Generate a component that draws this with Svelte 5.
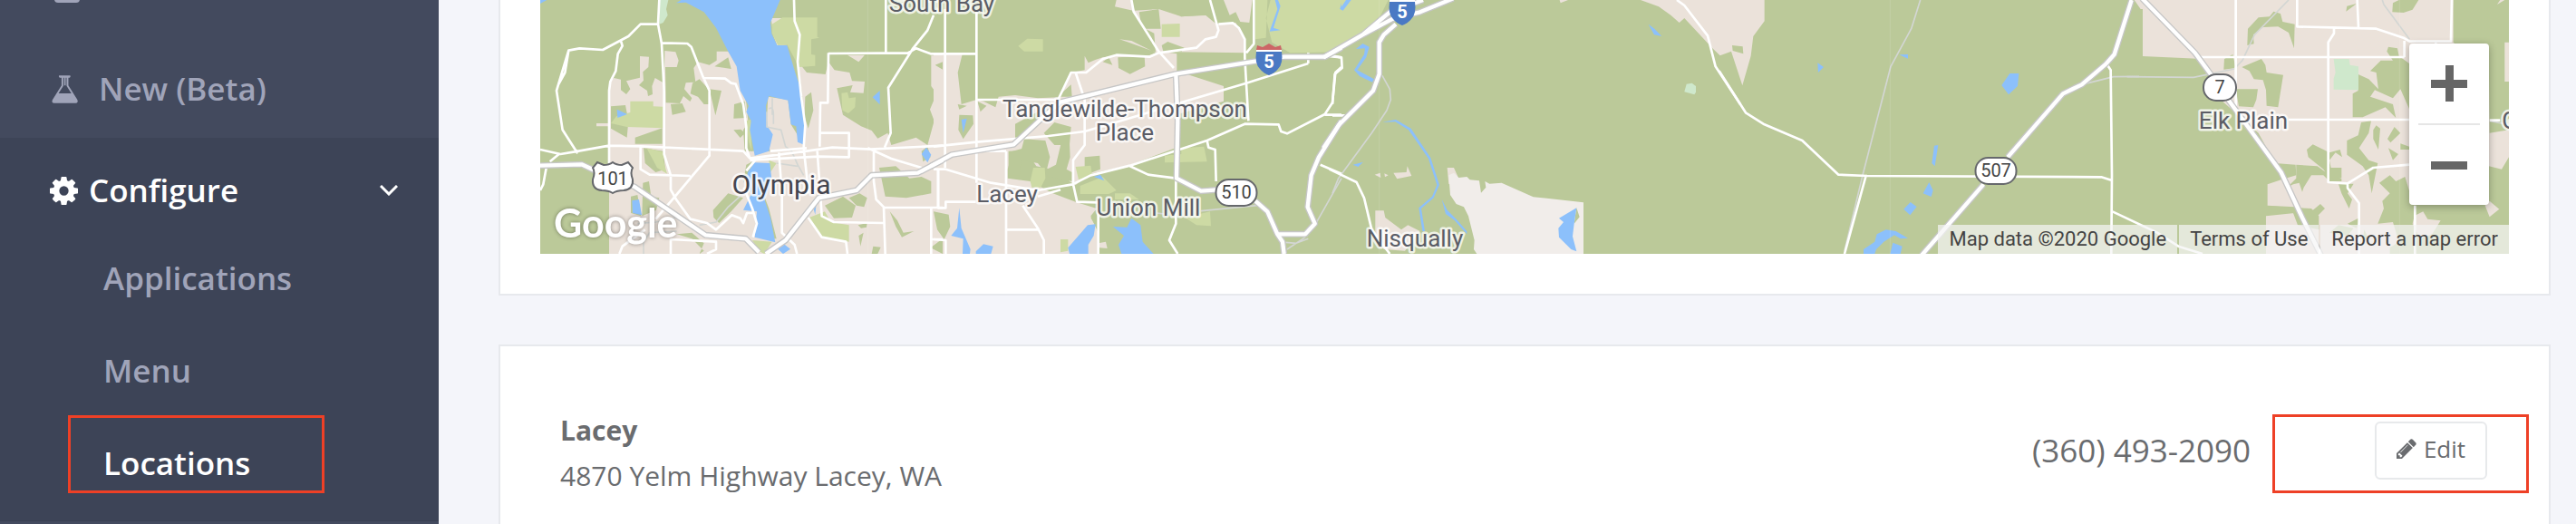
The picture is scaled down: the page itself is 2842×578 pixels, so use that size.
<script>
    const submenu = [
        { label: "Applications", active: false },
        { label: "Menu", active: false },
        { label: "Locations", active: true },
    ];

    const location = {
        name: "Lacey",
        address: "4870 Yelm Highway Lacey, WA",
        phone: "(360) 493-2090",
    };

    // Paint order of the map layers, bottom to top
    const layers = ["urban", "reserve", "green", "park", "mint", "water", "track", "road", "casing", "highway"];

    // Map geometry, one entry per tile. x is the tile offset in tile units (3 units = 1px)
    const olympia = {
        x: -18,
        urban:
            "M246 840V270L262 258 285 263 285 298 303 312 316 295 303 268 348 257V186L378 188 376 222 358 238 360 266 345 282 372 300 375 318 390 312 388 285 398 258 428 275 430 168 466 172 476 200 470 222 432 222 434 340 480 342 492 318 514 336 520 325 495 295 500 274 532 272 526 225 540 205 578 215 602 200V170H640L670 215 700 340 716 500H778L768 400 772 320 838 330 848 412 888 476 896 410 872 205 900 240 962 246 972 205 992 232 1042 240 1050 268 1092 270 1088 308 1044 305 1052 282 1000 292 1012 345 1020 380 1080 418 1115 432 1135 458 1168 440 1180 480 1262 455 1300 480 1322 400 1308 362 1330 310 1312 285V184H1350V840ZM204 408H250V418H204ZM1035 182H1092L1072 205ZM782 60L790 118 802 150 835 148 820 60Z",
        green:
            "M252 352L300 348 310 400 305 455 252 425ZM332 455L422 424V476L332 476ZM360 490L425 500 432 560 400 570 365 540ZM450 345L488 342 500 370 455 380ZM522 275L545 262 580 300V345H560L540 320 515 310ZM578 295L618 300 598 382ZM595 220L640 190 650 228ZM660 345L695 335 700 390 658 392ZM658 430L682 428 696 440 680 456ZM895 320L915 305 922 365 905 425 893 385ZM590 695L640 640 690 655 650 700 610 738 592 720ZM358 605L378 600 385 650 412 655 402 695 355 715ZM318 650L340 645 352 715 318 705ZM960 680L1020 650 1062 680 1050 720 990 722ZM1040 655L1075 640 1100 655 1090 685 1065 680ZM1140 555L1195 550 1240 590 1280 585 1312 600V640L1230 655 1160 650ZM1175 700L1200 730 1220 770 1255 765 1215 785 1195 750ZM1070 745L1100 738 1098 752 1080 755ZM1072 780L1088 770 1078 815ZM1120 815L1145 818 1135 840H1115ZM1310 820L1350 790V840ZM690 430L712 400 720 500H695ZM1280 500L1300 485 1310 520 1285 535ZM760 650L775 690 800 790 775 790ZM470 775L520 770 560 805 545 840 560 830 520 790ZM700 545L730 530 690 605ZM1325 215L1350 205V230Z",
        park:
            "M820 58H935V122L942 125 915 130V180L928 182V218L875 222 835 148 805 150 785 110 785 80ZM316 335H392V352L424 353V424L305 420 252 408 270 385 316 372ZM370 490L430 505 425 530 438 575 405 555ZM1015 308L1035 305 1040 325 1062 322 1060 355 1038 375 1018 365ZM700 400L715 395 718 500 708 470ZM908 720L960 700 980 735 1040 745V800L950 785ZM720 795L785 800 760 840 740 830ZM775 530L800 540 780 570Z",
        mint: "M414 0H442L435 30 440 50 425 75 412 80Z",
        water:
            "M468 10L500 8 560 40 600 92 640 170 668 220 680 300 708 350 700 370 716 400 712 430 728 515 775 500 788 445 770 418 765 350 775 318 838 332 848 412 865 418 870 470 888 478 896 415 882 340 880 295 862 240 835 150 802 150 784 112 780 75 812 0H485ZM18 0H40L18 12ZM272 362L306 378 274 390ZM1118 322L1142 300V346ZM728 538L778 540 785 600 760 660 780 720 796 802 728 785 735 700 690 695 718 640 700 600 705 570ZM322 664L345 660 354 712 324 705ZM1280 510L1296 488 1312 512 1300 538ZM802 822L825 808 846 824 822 840ZM920 680L932 675 928 710Z",
        track:
            "M775 360Q790 350 790 380V410M768 370V420L815 430 830 485 850 500 870 545 890 580M800 540L870 550M545 745L600 735 640 685 690 640M340 740L400 735 470 720M470 765L380 770 360 800V840M786 325V380",
        road:
            "M412 0L408 80 420 145 428 300V510L450 580V628L468 660 515 725 570 738 600 760 652 712 680 722 690 738 702 705 728 705M408 80H350L310 120 225 165 148 160 112 167 72 300 92 430 142 508M285 135L290 152 275 178 268 235 250 270 246 300V545M112 167L100 240 78 280M18 495L85 510 132 502 246 482 350 484 690 500 712 524 900 500 985 488 1110 494 1350 482M50 535L80 510M40 545L28 610 18 630M420 142L505 144 518 155 555 250 578 300V515L460 655 400 725M555 258L630 260 650 275 665 278 690 345 700 420V490L712 524M350 484V560L380 578 515 582M712 530L940 518 1040 520V440H945M858 0L860 70 877 115 870 205 882 320 895 415 890 490 900 580 905 640M972 175L970 340H945L943 485M935 500L945 640 950 715 990 735 1155 738M808 505L818 640V770L860 810 868 840M730 530L700 565M692 620L720 690 735 740 722 785M905 720L950 785 1030 800 1035 840M972 177L1235 175 1262 160 1310 178 1350 178M1162 0V175M1320 50L1300 100 1252 160 1170 290 1178 440 1158 488M1102 490L1180 525 1280 555M1122 500V600L1130 660 1155 685 1160 840M1155 687H1350M1312 687V840M1335 560V685M1312 792H1350M280 840L290 815 365 760M450 790V840M450 792L600 800 600 825 570 840M780 500L900 490",
        casing: "M18 548L155 544 200 565 330 618 565 778 698 790 742 835M765 840L830 795 940 655 1065 630 1115 580 1268 572 1350 530",
    };

    const lacey = {
        x: 1302,
        urban:
            "M0 180H95L80 240 92 345 142 330 165 335 205 355 215 320 270 315 345 325 415 322 455 240 500 232V185L512 208 535 198 560 190 620 184 700 188 750 170 805 178V235L960 285V335L800 380V490L652 545 520 575 470 612 450 600 405 545 390 560 340 550 300 490 262 500 245 560V590L320 600 395 640 470 668 540 690 520 715 545 770V840H0ZM605 0H655L665 35 745 30 820 55 900 50 930 75 945 80 1000 75 1030 130V175L800 172 740 175 650 142 615 130 655 135 735 175 730 110 700 95 660 35 600 22ZM930 0H1055L1045 75 1015 72 1000 40 980 50 960 0ZM545 805L570 800 575 822 550 820Z",
        green:
            "M248 500L290 498 300 460 370 465 385 520 375 560 405 545 430 440 450 470 452 520 440 560 458 570V600L380 585 345 540 290 530 285 580H248ZM270 410L345 370 350 400 270 465ZM145 335L175 350 155 370ZM85 380L130 382 132 410 98 460 82 430ZM0 700L50 710 55 750 35 792 12 760ZM410 320L455 280 458 320ZM680 40L745 30 752 95H690ZM820 20L870 0H920L930 50 870 52 818 55ZM755 150L775 138 830 158 820 172 760 170ZM610 190L698 185 700 220 650 245 612 225ZM560 205L580 190 592 215ZM520 720L545 700V765ZM500 520L550 515 552 560 500 580ZM80 345L110 350 85 362ZM365 440L400 405 455 420 450 480 400 480Z",
        park:
            "M755 80L815 78V122H755ZM280 152L310 128 362 130V170H300ZM1065 0H1115L1100 60 1120 140 1180 175 1350 172V0ZM1065 0H1105L1100 125 1065 130ZM470 552L520 548 525 580 480 595ZM485 615L560 585 605 630 580 642H485ZM765 515L820 510V490L895 485 905 535 765 538ZM832 720L915 700 918 748 870 745ZM320 600L330 555 368 555 370 590 355 620H325ZM420 792H445V830L420 835ZM600 640H650L680 660H600Z",
        water:
            "M1130 0H1140L1148 20 1125 92 1148 100 1112 104 1138 30ZM92 396L110 392 98 440ZM85 688L92 755 122 825 120 840H96L98 790 58 780 78 755ZM140 832L165 808 197 815 190 840H140ZM445 820L510 745 536 742 530 780 512 810V840H450ZM594 750L640 752 655 722 685 745 692 800 728 840H622L612 810 630 780ZM530 585L552 578 565 598ZM1345 30L1350 10V30Z",
        track: "M885 698L1070 680M1350 590L1265 740M1240 790L1200 805 1165 802M1230 785L1170 825M740 705L775 710",
        road:
            "M0 178H142M38 30V555M142 40V605M0 485L142 470 380 450 500 435 620 400 850 330 1035 275 1240 210M142 330H412L455 240H505L560 195 605 182 715 188 745 175 870 158 900 130 935 122 943 100 915 0M470 240L500 330V480L462 530V610L475 668 545 670V840M655 0L662 38 745 170 795 225M943 80L990 76 1010 92 1030 130V190L1042 400M1060 0V145L1035 175M0 560H40L190 605 345 630 460 610 520 580 650 548 905 465 1030 410 1142 412 1150 435 1170 442 1295 378 1320 340 1330 240 1350 222M650 550L710 578 802 590V740L780 795 808 840M905 465L910 488 932 495 935 600M240 500V840M142 500H240M242 760H345M15 560V688H40V668H140M295 680L345 755 365 795V840M0 792L40 795V840M1295 380H1350M1240 175V210M1280 545L1350 575M345 650L420 628M1300 185L1350 190",
        casing:
            "M-10 550L60 512 265 478 360 390 420 338 800 245 1050 205 1160 188H1295L1350 158M802 245L808 400 804 590 885 632 940 628M1065 665L1105 700 1138 775 1155 800 1160 840M1138 775H1230L1262 740 1238 685 1250 580 1275 520 1350 400",
    };

    const nisqually = {
        x: 2622,
        urban:
            "M1020 0H1430V70L1393 120 1385 185 1357 283 1320 170 1283 184 1258 160 1165 60 1148 75 1120 50 1080 22ZM1323 150L1358 152V178L1325 170ZM752 0H780L755 10ZM142 697H170L175 720 228 760 250 745 290 765 240 830 170 825 142 775ZM380 555H402L418 590 385 610ZM202 572L245 570 248 550 262 582 214 592ZM140 578L158 572 160 588ZM172 574L185 580 174 586Z",
        reserve:
            "M385 580L402 572 418 588 445 585 455 595 486 598 492 638 508 620 505 600 520 608 560 605 665 652 710 656 831 670V840H478L468 825 470 795 450 715 435 685 410 675 390 645Z",
        green: "M1323 150L1358 154 1360 178 1325 168ZM808 688L818 718 800 740Z",
        park: "M0 0H185L160 50 100 110 0 165Z",
        mint: "M1172 278L1190 275 1203 285V305L1198 313 1165 304Z",
        water:
            "M45 0H62L35 35 25 30ZM78 162L100 144 122 155 112 190 82 232 138 262 132 272 90 252 72 232 105 180 108 160ZM165 404L210 396 260 425 325 522 354 612 335 655 294 690 306 765H298L286 688 330 650 346 612 318 525 252 430 208 403ZM362 660L380 695 410 725 445 765V775L405 730 375 708ZM808 688L800 740 795 782 808 832 790 825 750 785 748 755 765 735 750 722ZM1046 80L1066 95 1090 120 1065 115ZM68 545L102 536 85 552Z",
        track: "M165 250L190 295 193 330 180 365 130 440 20 590 0 640",
        road: "M1140 0L1165 18 1242 118 1268 220 1350 345M-10 560L80 603 105 655 130 760 190 840M0 185L30 190 32 225 8 245 0 345M0 382H45",
        casing:
            "M-30 190L100 115 190 40 300 0M100 115L200 62 290 40 400 -5M210 80L170 115 155 140V245L135 300 20 415 -30 490",
    };

    const yelm = {
        x: 3942,
        water:
            "M286 208L306 222 288 240ZM556 181L585 180V194ZM922 243H952L948 285 918 313 895 282ZM672 482L685 480 674 550 664 540ZM655 603L668 630 662 651 635 640ZM593 669L614 684 592 712 571 692ZM482 775L512 760 545 765 585 788 560 790 540 778 505 800 480 825 475 840H438V825L475 800ZM535 803L566 815 560 840H526Z",
        track: "M626 0L596 95 528 220 435 580 375 830M1160 280L1265 254 1350 253",
        road: "M-40 235L48 373 110 412 235 465 355 578 450 582 1225 586 1258 596M445 585L375 840M1245 215L1256 232 1260 580 1258 840M1262 700L1410 770 1480 815 1560 840",
        casing: "M1325 0L1268 180 1240 212 1160 280 1098 310 915 520M835 610L630 845",
    };

    const elkPlain = {
        x: 5262,
        urban:
            "M14 0H1070V140L1188 250 1190 440 1254 430V520L1230 560 1188 550 1000 480 940 500 900 840H450V715L545 705V685L455 680V610L500 595 550 580 548 545 480 540 425 440 300 330 240 195 42 186V30H35ZM1240 140H1254V270H1240ZM1175 680L1190 665 1222 692 1190 718ZM925 722L970 700 985 725 1028 730 1000 775 960 790ZM1215 15L1240 0H1225Z",
        green:
            "M388 150L390 95 425 58 462 55 475 38 498 45 505 72 545 80 543 160 525 108 490 88 440 90 408 115 410 145ZM310 230L312 195 340 180 350 225ZM370 222L435 195 448 215 452 240 507 248 490 355 452 350 450 298 440 265 410 262 395 235ZM350 295H423L418 330 408 355 360 352ZM870 10L890 0H955L935 32 905 42 868 40ZM718 20L750 12 715 38ZM742 240L790 262 822 295 815 240 795 235 830 200 870 200 850 170 855 155 885 160 890 185 924 210V360L895 295 870 325 810 298 795 320 870 345 880 390 845 355 770 388H737V310L755 300ZM765 405L798 400 790 440 758 490 790 530 820 540 800 640 790 580 770 550 718 512V465L755 448ZM805 430L815 415 828 425 822 495 805 460ZM875 420L895 440 862 472 852 460ZM855 490L888 510 870 530ZM895 475L924 485V495H895ZM585 495L605 478 660 505 695 495 702 520 680 505 660 530 665 555 700 555V588H660L640 560 615 540 590 520ZM550 545L620 550 655 575 700 590V600L660 600 640 580 600 580 575 620 570 635 560 605 540 610 520 620 550 590ZM690 610L740 608 720 640 735 660 725 690 700 640ZM825 605L860 580 880 600 910 585 945 700 910 840H860V820L890 800 870 735 820 740 840 690 835 665 860 640ZM600 700L630 675 645 690 610 725ZM660 770L690 745 740 755 720 780ZM455 682L600 690 625 715V760L555 745 540 705 500 702ZM720 740L760 720 750 755ZM775 760L790 790 770 800Z",
        mint: "M674 195H725L728 215 756 220V298L674 296V260L680 240Z",
        park: "M685 212L692 210 694 238H685Z",
        track: "M-10 254L210 256 345 228 372 200 412 115 525 0M835 0L840 15 925 130M1190 400L1254 412",
        road: "M350 0V355M232 189H908M553 0V88L700 92 815 95 905 125 925 137H1062L1065 0M752 0L756 90M675 95V110L656 140V603L720 607 805 555 924 545M908 189V135M525 396H924M1190 398H1225M720 610V622L758 672V840M943 680V840M1012 140V150",
        casing: "M40 -5L215 175 270 250M325 330L500 570 570 720 632 845",
    };

    const tiles = [olympia, lacey, nisqually, yelm, elkPlain].map((t) => ({ ...t, highway: t.casing }));

    const places = [
        { text: "South Bay", x: 443, y: 13 },
        { text: "Tanglewilde-Thompson", x: 645, y: 129 },
        { text: "Place", x: 645, y: 155 },
        { text: "Lacey", x: 515, y: 223 },
        { text: "Union Mill", x: 671, y: 238 },
        { text: "Nisqually", x: 965, y: 272 },
        { text: "Elk Plain", x: 1879, y: 142 },
        { text: "G", x: 2173, y: 142 },
    ];

    const routes = [
        { text: "510", x: 768, y: 212, w: 45 },
        { text: "507", x: 1606, y: 188, w: 45 },
        { text: "7", x: 1853, y: 96, w: 36 },
    ];

    const interstates = [
        { x: 804, y: 66 },
        { x: 951, y: 11 },
    ];
</script>

<div class="layout">
    <nav class="sidebar" aria-label="Main">
        <div class="nav-peek">
            <svg class="peek-icon" viewBox="0 0 28 28" aria-hidden="true">
                <rect width="28" height="28" rx="4" />
            </svg>
        </div>
        <a class="nav-item" href="#new">
            <svg class="nav-icon" viewBox="0 0 90 94" aria-hidden="true">
                <path
                    fill-rule="evenodd"
                    d="M27 1H62Q64 1 64 4T61 8H57V34L87 82Q91 93 81 93H10Q-1 93 4 82L34 34V8H29Q25 8 25 4T27 1ZM40 8V36L24 61H67L51 36V8H48V34H43V8Z"
                />
            </svg>
            <span class="nav-label">New (Beta)</span>
        </a>
        <div class="nav-section">
            <button type="button" class="nav-toggle" aria-expanded="true">
                <svg class="nav-icon" viewBox="128 128 1536 1536" aria-hidden="true">
                    <path
                        d="M1152 896q0-106-75-181t-181-75-181 75-75 181 75 181 181 75 181-75 75-181zm512-109v222q0 12-8 23t-20 13l-185 28q-19 54-39 91 35 50 107 138 10 12 10 25t-9 23q-27 37-99 108t-94 71q-12 0-26-9l-138-108q-44 23-91 38-16 136-29 186-7 28-36 28h-222q-14 0-24.5-8.5t-11.5-21.5l-28-184q-49-16-90-37l-141 107q-10 9-25 9-14 0-25-11-126-114-165-168-7-10-7-23 0-12 8-23 15-21 51-66.5t54-70.5q-27-50-41-99l-183-27q-13-2-21-12.5t-8-23.5v-222q0-12 8-23t19-13l186-28q14-46 39-92-40-57-107-138-10-12-10-24 0-10 9-23 26-36 98.5-107.5t94.5-71.5q13 0 26 10l138 107q44-23 91-38 16-136 29-186 7-28 36-28h222q14 0 24.5 8.5t11.5 21.5l28 184q49 16 90 37l142-107q9-9 24-9 13 0 25 10 129 119 165 170 7 8 7 22 0 12-8 23-15 21-51 66.5t-54 70.5q26 50 41 98l183 28q13 2 21 12.5t8 23.5z"
                    />
                </svg>
                <span class="toggle-label">Configure</span>
                <svg class="chevron" viewBox="0 0 20 12" aria-hidden="true">
                    <path d="M1 1l9 9 9-9" />
                </svg>
            </button>
            <ul class="submenu">
                {#each submenu as item}
                    <li>
                        <a
                            class="submenu-link"
                            class:active={item.active}
                            aria-current={item.active ? "page" : undefined}
                            href="#{item.label.toLowerCase()}"
                        >{item.label}</a>
                    </li>
                {/each}
            </ul>
        </div>
    </nav>

    <main class="content">
        <section class="card map-card">
            <div class="map">
                <svg class="map-canvas" viewBox="0 0 2172 280" preserveAspectRatio="xMidYMid slice" role="img" aria-label="Map of Lacey and Olympia">
                    <g transform="scale(0.33333)">
                        {#each layers as layer}
                            {#each tiles as tile}
                                {#if tile[layer]}
                                    <path class={layer} d={tile[layer]} transform="translate({tile.x})" />
                                {/if}
                            {/each}
                        {/each}
                        <path class="seam" d="M1084 0V840M2777 0V840M4468 0V840M6154 0V840" />
                    </g>

                    <g transform="translate(80 195)">
                        <path class="shield" d="M-17 -16L-10 -13Q-4 -13 0 -16Q4 -13 10 -13L17 -16L22 -10Q19 -5 22 3Q23 14 12 15Q5 15 0 18Q-5 15 -12 15Q-23 14 -22 3Q-19 -5 -22 -10Z" />
                        <text class="route" y="9">101</text>
                    </g>
                    {#each routes as route}
                        <g transform="translate({route.x} {route.y})">
                            <rect class="shield" x={-route.w / 2} y="-14" width={route.w} height="29" rx="14" />
                            <text class="route" y="7">{route.text}</text>
                        </g>
                    {/each}
                    {#each interstates as sign}
                        <g transform="translate({sign.x} {sign.y})">
                            <path class="sign-top" d="M-13 -16L-7 -14 0 -18 7 -14 13 -16 14 -11H-14Z" />
                            <path class="sign-edge" d="M-14 -11H14V-8H-14Z" />
                            <path class="sign-body" d="M-14 -9H14Q16 4 10 10Q6 15 0 17Q-6 15 -10 10Q-16 4 -14 -9Z" />
                            <text class="sign-text" y="9">5</text>
                        </g>
                    {/each}

                    {#each places as place}
                        <text class="place" x={place.x} y={place.y}>{place.text}</text>
                    {/each}
                    <text class="place city" x="266" y="214">Olympia</text>
                    <text class="google" x="15" y="262">Google</text>
                </svg>

                <div class="zoom">
                    <button type="button" class="zoom-button" aria-label="Zoom in">
                        <svg viewBox="0 0 40 40" aria-hidden="true"><path d="M16 0h9v16h15v9H25v15h-9V25H0v-9h16z" /></svg>
                    </button>
                    <button type="button" class="zoom-button" aria-label="Zoom out">
                        <svg viewBox="0 0 40 40" aria-hidden="true"><path d="M0 16h40v9H0z" /></svg>
                    </button>
                </div>

                <div class="attribution">
                    <span>Map data ©2020 Google</span>
                    <a href="#terms">Terms of Use</a>
                    <a href="#report">Report a map error</a>
                </div>
            </div>
        </section>

        <section class="card location-card">
            <div class="location-info">
                <h2>{location.name}</h2>
                <p>{location.address}</p>
            </div>
            <div class="location-phone">{location.phone}</div>
            <div class="location-actions">
                <button type="button" class="edit-button">
                    <svg viewBox="128 128 1536 1536" aria-hidden="true">
                        <path
                            d="M491 1536l91-91-235-235-91 91v107h128v128h107zm523-928q0-22-22-22-10 0-17 7l-542 542q-7 7-7 17 0 22 22 22 10 0 17-7l542-542q7-7 7-17zm-54-192l416 416-832 832h-416v-416zm683 96q0 53-37 90l-166 166-416-416 166-165q36-38 90-38 53 0 91 38l235 234q37 39 37 91z"
                        />
                    </svg>
                    Edit
                </button>
            </div>
        </section>
    </main>
</div>

<style>
    :global(body) {
        margin: 0;
        background: #f4f5fa;
        font-family: "Open Sans", "Noto Sans", sans-serif;
        color: #6a6c6f;
    }
    .layout {
        display: flex;
        min-height: 100vh;
    }

    /* Sidebar */
    .sidebar {
        flex: 0 0 484px;
        background: #434a5e;
        color: #a0a4b9;
        font-size: 35px;
        font-weight: 600;
        line-height: 52px;
    }
    .nav-peek {
        height: 40px;
        padding-left: 60px;
        overflow: hidden;
    }
    .peek-icon {
        display: block;
        width: 28px;
        height: 28px;
        margin-top: -25px;
        fill: currentColor;
    }
    .nav-item {
        display: flex;
        box-sizing: border-box;
        align-items: center;
        gap: 22px;
        height: 112px;
        padding: 4px 0 0 56px;
        color: inherit;
        text-decoration: none;
    }
    .nav-icon {
        width: 31px;
        height: 31px;
        fill: currentColor;
    }
    .nav-section {
        padding: 12px 0;
        border-bottom: 1px solid #394052;
        background: #3d4457;
    }
    .nav-toggle {
        display: flex;
        align-items: center;
        gap: 12px;
        width: 100%;
        height: 92px;
        padding: 0 45px 0 55px;
        border: 0;
        background: none;
        color: #fff;
        font: inherit;
        text-align: left;
        cursor: pointer;
    }
    .toggle-label { flex: 1; }
    .chevron {
        width: 20px;
        height: 12px;
        fill: none;
        stroke: currentColor;
        stroke-width: 3;
    }
    .submenu {
        margin: 0;
        padding: 0;
        list-style: none;
    }
    .submenu-link {
        display: flex;
        position: relative;
        align-items: center;
        height: 102px;
        padding-left: 114px;
        color: inherit;
        text-decoration: none;
    }
    .submenu-link.active { color: #fff; }
    .submenu-link.active::after {
        content: "";
        position: absolute;
        top: -2px;
        left: 75px;
        box-sizing: border-box;
        width: 283px;
        height: 86px;
        border: 3px solid #ee4026;
    }

    /* Content */
    .content {
        display: flex;
        flex: 1;
        flex-direction: column;
        gap: 54px;
        min-width: 0;
        padding: 0 28px 0 66px;
    }
    .card {
        border: 2px solid #e7e9ed;
        background: #fff;
    }
    .map-card {
        padding: 0 44px 44px;
        border-top: 0;
    }
    .map {
        position: relative;
        height: 280px;
        overflow: hidden;
        background: #bbc999;
        font-family: Roboto, sans-serif;
    }
    .map-canvas {
        display: block;
        width: 100%;
        height: 100%;
    }
    .urban { fill: #ebe2da; }
    .reserve { fill: #f1edea; }
    .green { fill: #bbc999; }
    .park { fill: #cddaa4; }
    .mint { fill: #cfe8cc; }
    .water { fill: #8cc0fb; }
    .track,
    .road,
    .casing,
    .highway,
    .seam {
        fill: none;
        stroke-linejoin: round;
    }
    .track { stroke: #d3d6d3; stroke-width: 5; }
    .road { stroke: #fff; stroke-width: 8; }
    .casing { stroke: #c6c6c6; stroke-width: 21; }
    .highway { stroke: #fff; stroke-width: 13; }
    .seam { stroke: #fff; stroke-width: 2; opacity: 0.2; }
    .shield {
        fill: #fff;
        stroke: #66686c;
        stroke-width: 2;
    }
    .route,
    .sign-text,
    .place { text-anchor: middle; }
    .route { fill: #444; font-size: 20px; }
    .sign-top { fill: #cc6666; }
    .sign-edge { fill: #fff; }
    .sign-body { fill: #4a79c4; }
    .sign-text { fill: #fff; font-size: 20px; font-weight: 700; }
    .place {
        fill: #5b5d66;
        stroke: rgba(255, 255, 255, 0.75);
        stroke-width: 5px;
        stroke-linejoin: round;
        paint-order: stroke;
        font-size: 26px;
    }
    .place.city { fill: #44454f; font-size: 30px; }
    .google {
        fill: #fff;
        font-family: Lato, sans-serif;
        font-size: 43px;
        font-weight: 700;
        filter: drop-shadow(0 0 2px rgba(0, 0, 0, 0.4));
    }
    .zoom {
        position: absolute;
        top: 48px;
        right: 22px;
        width: 88px;
        border-radius: 4px;
        background: #fff;
        box-shadow: 0 2px 8px rgba(0, 0, 0, 0.3);
    }
    .zoom-button {
        display: flex;
        align-items: center;
        justify-content: center;
        width: 68px;
        height: 88px;
        margin: 0 10px;
        padding: 0;
        border: 0;
        background: none;
        cursor: pointer;
    }
    .zoom-button + .zoom-button {
        height: 90px;
        border-top: 2px solid #e6e6e6;
    }
    .zoom-button svg {
        width: 40px;
        height: 40px;
        fill: #666;
    }
    .attribution {
        display: flex;
        position: absolute;
        right: 0;
        bottom: 0;
        gap: 2px;
        color: #444;
        font-size: 22px;
        line-height: 32px;
    }
    .attribution > * {
        padding: 0 12px;
        background: rgba(245, 245, 245, 0.7);
        color: inherit;
        text-decoration: none;
    }

    /* Location row */
    .location-card {
        display: flex;
        flex: 1;
        align-items: flex-start;
        padding: 68px 22px 30px 66px;
    }
    .location-info {
        flex: 1;
        font-size: 30px;
        line-height: 50px;
    }
    .location-info h2 {
        margin: 0;
        font-size: inherit;
        font-weight: 700;
    }
    .location-info p { margin: 0; }
    .location-phone {
        padding: 22px 24px 0 0;
        font-size: 35px;
        line-height: 50px;
    }
    .location-actions {
        display: flex;
        box-sizing: border-box;
        justify-content: flex-end;
        width: 283px;
        height: 87px;
        margin-top: 7px;
        padding: 5px 43px 0 0;
        border: 3px solid #ee4026;
    }
    .edit-button {
        display: flex;
        box-sizing: border-box;
        align-items: center;
        justify-content: center;
        gap: 8px;
        width: 124px;
        height: 64px;
        padding: 0 0 4px;
        border: 2px solid #e7e9eb;
        border-radius: 6px;
        background: #fff;
        color: inherit;
        font-family: inherit;
        font-size: 26px;
        cursor: pointer;
    }
    .edit-button svg {
        width: 22px;
        height: 22px;
        fill: currentColor;
    }
</style>
